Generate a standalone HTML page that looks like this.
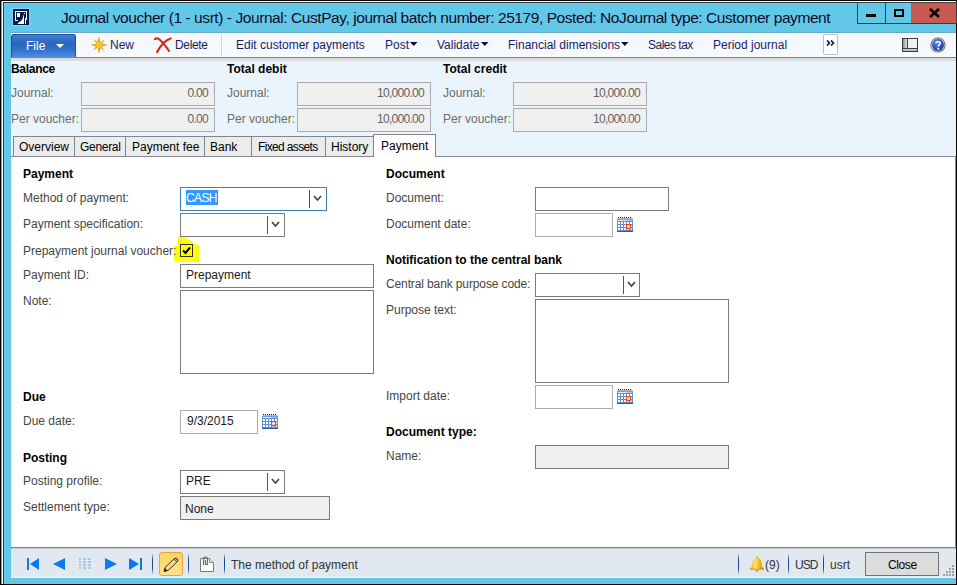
<!DOCTYPE html>
<html><head><meta charset="utf-8">
<style>
*{margin:0;padding:0;box-sizing:border-box}
html,body{width:957px;height:585px;overflow:hidden;background:#000}
body{position:relative;font-family:"Liberation Sans",sans-serif;font-size:12px;}
.a{position:absolute}
.t{position:absolute;white-space:nowrap;line-height:14px;font-size:12px}
.lbl{color:#454545}
.hd{font-weight:bold;color:#000}
.box{position:absolute;border:1px solid #7a7a7a;background:#fff}
.ro{position:absolute;border:1px solid #a8aaae;background:#f0f0f0}
.lt{position:absolute;border:1px solid #abadb2;background:#fff}
.val{position:absolute;white-space:nowrap;line-height:14px;color:#626262;text-align:right;letter-spacing:-0.72px}
.div{position:absolute;width:1px;background:#555}
.chev{position:absolute}
.tab{position:absolute;top:136px;height:20px;background:#ececec;border:1px solid #84848c;border-bottom:none}
.sep{position:absolute;width:1px;background:#4a6a96}
</style></head><body>
<!-- window frame -->
<div class="a" style="left:0;top:0;width:957px;height:585px;background:#000"></div>
<div class="a" style="left:1px;top:1px;width:955px;height:583px;background:#999"></div>
<div class="a" style="left:2px;top:1px;width:954px;height:583px;background:#fff"></div>
<div class="a" style="left:3px;top:2px;width:953px;height:582px;background:#2e3236"></div>
<div class="a" style="left:4px;top:3px;width:952px;height:581px;background:#66d3f4"></div>
<div class="a" style="left:5px;top:4px;width:951px;height:580px;background:#63c7e8"></div>
<div class="a" style="left:956px;top:1px;width:1px;height:584px;background:#000"></div>
<div class="a" style="left:0;top:584px;width:957px;height:1px;background:#000"></div>

<!-- app icon -->
<svg class="a" style="left:12px;top:8px" width="18" height="18" viewBox="0 0 18 18">
<rect x="0" y="0" width="18" height="18" fill="#7ad6f2"/>
<rect x="1" y="1" width="16" height="16" fill="#001a4a"/>
<path d="M3 3h12v9h-1V4H4v8h2v1H3z" fill="#fff"/>
<rect x="5" y="5" width="3" height="4" fill="#fff"/>
<path d="M5 16 L10 12 L12 6 L12 16 Z" fill="#fff"/>
<rect x="13" y="10" width="1" height="6" fill="#fff"/>
<rect x="12" y="5" width="1" height="1" fill="#fff"/>
</svg>

<!-- title -->
<div class="t" style="left:61px;top:8px;font-size:15.5px;line-height:20px;letter-spacing:-0.43px;color:#0c0c2a">Journal voucher (1 - usrt) - Journal: CustPay, journal batch number: 25179, Posted: NoJournal type: Customer payment</div>

<!-- caption buttons -->
<div class="a" style="left:857px;top:2px;width:100px;height:22px;background:#3c3c3c"></div>
<div class="a" style="left:858px;top:3px;width:27px;height:20px;background:#63c8e8"></div>
<div class="a" style="left:886px;top:3px;width:25px;height:20px;background:#63c8e8"></div>
<div class="a" style="left:911px;top:3px;width:45px;height:20px;background:#c75a50"></div>
<div class="a" style="left:866px;top:14px;width:10px;height:3px;background:#000"></div>
<div class="a" style="left:894px;top:9px;width:10px;height:8px;border:2px solid #000"></div>
<svg class="a" style="left:929px;top:8px" width="11" height="10" viewBox="0 0 11 10"><path d="M1 1L10 9M10 1L1 9" stroke="#000" stroke-width="2.6"/></svg>

<!-- toolbar -->
<div class="a" style="left:11px;top:32px;width:945px;height:1px;background:#6ca9c9"></div>
<div class="a" style="left:11px;top:33px;width:945px;height:24px;background:linear-gradient(#ffffff,#f3f8fe 8%,#f6fafe 90%,#ffffff)"></div>
<div class="a" style="left:11px;top:57px;width:945px;height:1px;background:#7d818b"></div>
<div class="a" style="left:11px;top:34px;width:65px;height:23px;border:1px solid #1f4d9e;border-bottom:none;border-radius:3px 3px 0 0;background:linear-gradient(#3f7fd4,#2b65bb 40%,#3474cb 70%,#4a8ee2)"></div>
<div class="t" style="left:26px;top:39px;color:#fff">File</div>
<svg class="a" style="left:56px;top:44px" width="8" height="5"><path d="M0 0H8L4 4Z" fill="#fff"/></svg>

<svg class="a" style="left:91px;top:37px" width="16" height="16" viewBox="0 0 16 16">
<g fill="#f4a40c" stroke="#d08a10" stroke-width="0.4">
<path d="M8 0.3L9.6 6.4L15.7 8L9.6 9.6L8 15.7L6.4 9.6L0.3 8L6.4 6.4Z"/>
<path d="M2.8 2.8L8.9 6.7L13.2 2.8L9.3 8.9L13.2 13.2L7.1 9.3L2.8 13.2L6.7 7.1Z"/>
</g>
<circle cx="8" cy="8" r="3" fill="#ffc81a"/>
</svg>
<div class="t" style="left:110px;top:38px;color:#1e1b5e">New</div>
<svg class="a" style="left:154px;top:37px" width="18" height="17" viewBox="0 0 18 17">
<path d="M1 2.2C2 1 4 1.2 5.5 2.5C9 5.5 12 9.5 15 14" stroke="#d8280e" stroke-width="2.1" fill="none" stroke-linecap="round"/>
<path d="M16.5 1.5C12 3 7 7.5 3.2 15" stroke="#d8280e" stroke-width="2.3" fill="none" stroke-linecap="round"/>
</svg>
<div class="t" style="left:175px;top:38px;color:#1e1b5e;letter-spacing:-0.35px">Delete</div>
<div class="a" style="left:221px;top:34px;width:1px;height:22px;background:#d0d6de"></div>
<div class="t" style="left:236px;top:38px;color:#1e1b5e">Edit customer payments</div>
<div class="t" style="left:385px;top:38px;color:#1e1b5e">Post</div>
<svg class="a" style="left:410px;top:42px" width="8" height="5"><path d="M0 0H7.5L3.75 4Z" fill="#0c0c3c"/></svg>
<div class="t" style="left:437px;top:38px;color:#1e1b5e">Validate</div>
<svg class="a" style="left:481px;top:42px" width="8" height="5"><path d="M0 0H7.5L3.75 4Z" fill="#0c0c3c"/></svg>
<div class="t" style="left:508px;top:38px;color:#1e1b5e">Financial dimensions</div>
<svg class="a" style="left:621px;top:42px" width="8" height="5"><path d="M0 0H7.5L3.75 4Z" fill="#0c0c3c"/></svg>
<div class="t" style="left:648px;top:38px;color:#1e1b5e;letter-spacing:-0.5px">Sales tax</div>
<div class="t" style="left:713px;top:38px;color:#1e1b5e">Period journal</div>
<div class="a" style="left:823px;top:34px;width:15px;height:21px;border:1px solid #b8c0cc;border-radius:2px;background:#fff"></div>
<svg class="a" style="left:826px;top:40px" width="9" height="6" viewBox="0 0 9 6"><path d="M1 0.5L3.5 3L1 5.5M5 0.5L7.5 3L5 5.5" stroke="#0a1650" stroke-width="1.6" fill="none"/></svg>
<svg class="a" style="left:902px;top:38px" width="16" height="14" viewBox="0 0 16 14">
<defs><linearGradient id="lg1" x1="0" x2="1" y1="0" y2="0"><stop offset="0" stop-color="#8a8e92"/><stop offset="1" stop-color="#e6e8ea"/></linearGradient>
<linearGradient id="lg2" x1="0" x2="0" y1="0" y2="1"><stop offset="0" stop-color="#d8dadc"/><stop offset="1" stop-color="#a8acb0"/></linearGradient></defs>
<rect x="0" y="0" width="16" height="14" fill="#3a3e42"/>
<rect x="1" y="1" width="4" height="9" fill="url(#lg1)"/>
<rect x="6" y="1" width="9" height="9" fill="#f2f2f2"/>
<rect x="1" y="11" width="14" height="2" fill="url(#lg2)"/>
</svg>
<svg class="a" style="left:930px;top:37px" width="16" height="16" viewBox="0 0 16 16">
<defs><radialGradient id="hg" cx="0.4" cy="0.35" r="0.7"><stop offset="0" stop-color="#5a8ae8"/><stop offset="0.6" stop-color="#2a52c0"/><stop offset="1" stop-color="#1a3a98"/></radialGradient></defs>
<circle cx="8" cy="8" r="7.6" fill="#555a60"/>
<circle cx="8" cy="8" r="6.8" fill="#c8ccd0"/>
<circle cx="8" cy="8" r="5.9" fill="url(#hg)"/>
<path d="M5.9 6.3C5.9 4.1 10.3 4.1 10.3 6.2C10.3 7.6 8.2 7.7 8.2 9.6" stroke="#f0f0f0" stroke-width="1.7" fill="none"/>
<rect x="7.2" y="10.7" width="2" height="2" fill="#f0f0f0"/>
</svg>

<!-- header info area -->
<div class="a" style="left:11px;top:58px;width:945px;height:99px;background:#eaf4fc"></div>
<div class="a" style="left:11px;top:58px;width:945px;height:3px;background:#dcdee2"></div>

<div class="t hd" style="left:11px;top:62px;letter-spacing:-0.3px">Balance</div>
<div class="t lbl" style="left:11px;top:86px;color:#6d6d6d">Journal:</div>
<div class="t lbl" style="left:11px;top:112px;color:#6d6d6d">Per voucher:</div>
<div class="ro" style="left:81px;top:82px;width:134px;height:24px"></div>
<div class="ro" style="left:81px;top:108px;width:134px;height:24px"></div>
<div class="val" style="left:81px;top:86px;width:127px">0.00</div>
<div class="val" style="left:81px;top:112px;width:127px">0.00</div>

<div class="t hd" style="left:227px;top:62px">Total debit</div>
<div class="t lbl" style="left:227px;top:86px;color:#6d6d6d">Journal:</div>
<div class="t lbl" style="left:227px;top:112px;color:#6d6d6d">Per voucher:</div>
<div class="ro" style="left:297px;top:82px;width:134px;height:24px"></div>
<div class="ro" style="left:297px;top:108px;width:134px;height:24px"></div>
<div class="val" style="left:297px;top:86px;width:127px">10,000.00</div>
<div class="val" style="left:297px;top:112px;width:127px">10,000.00</div>

<div class="t hd" style="left:443px;top:62px">Total credit</div>
<div class="t lbl" style="left:443px;top:86px;color:#6d6d6d">Journal:</div>
<div class="t lbl" style="left:443px;top:112px;color:#6d6d6d">Per voucher:</div>
<div class="ro" style="left:513px;top:82px;width:134px;height:24px"></div>
<div class="ro" style="left:513px;top:108px;width:134px;height:24px"></div>
<div class="val" style="left:513px;top:86px;width:127px">10,000.00</div>
<div class="val" style="left:513px;top:112px;width:127px">10,000.00</div>

<!-- tabs -->
<div class="tab" style="left:13px;width:62px"></div>
<div class="tab" style="left:74px;width:52px"></div>
<div class="tab" style="left:125px;width:80px"></div>
<div class="tab" style="left:204px;width:48px"></div>
<div class="tab" style="left:251px;width:75px"></div>
<div class="tab" style="left:325px;width:49px"></div>
<div class="t" style="left:19px;top:140px;color:#000">Overview</div>
<div class="t" style="left:80px;top:140px;color:#000;letter-spacing:-0.3px">General</div>
<div class="t" style="left:132px;top:140px;color:#000">Payment fee</div>
<div class="t" style="left:210px;top:140px;color:#000">Bank</div>
<div class="t" style="left:258px;top:140px;color:#000;letter-spacing:-0.65px">Fixed assets</div>
<div class="t" style="left:331px;top:140px;color:#000">History</div>

<!-- content -->
<div class="a" style="left:11px;top:156px;width:945px;height:391px;background:#fff;border-top:1px solid #84848c;border-right:1px solid #8a8e98"></div>
<div class="a" style="left:373px;top:134px;width:63px;height:23px;background:#fff;border:1px solid #84848c;border-bottom:none"></div>
<div class="t" style="left:381px;top:139px;color:#000">Payment</div>

<svg class="a" style="left:174px;top:237px" width="26" height="26" viewBox="0 0 26 26"><path d="M4 0H11L23 8H25V25H16L0 24V9H4Z" fill="#ffff00"/></svg>
<div class="t hd" style="left:23px;top:167px">Payment</div>
<div class="t lbl" style="left:23px;top:191px">Method of payment:</div>
<div class="t lbl" style="left:23px;top:217px">Payment specification:</div>
<div class="t lbl" style="left:23px;top:244px">Prepayment journal voucher:</div>
<div class="t lbl" style="left:23px;top:268px">Payment ID:</div>
<div class="t lbl" style="left:23px;top:294px">Note:</div>

<div class="box" style="left:180px;top:187px;width:147px;height:24px;border-color:#3c7fb1"></div>
<div class="a" style="left:186px;top:190px;width:32px;height:15px;background:#3399ff"></div>
<div class="t" style="left:186px;top:191px;color:#fff;letter-spacing:-0.6px">CASH</div>
<div class="a" style="left:217px;top:190px;width:1px;height:15px;background:#e06010"></div>
<div class="div" style="left:309px;top:190px;height:18px"></div>

<div class="box" style="left:180px;top:213px;width:105px;height:24px"></div>
<div class="div" style="left:267px;top:216px;height:18px"></div>

<div class="a" style="left:180px;top:244px;width:13px;height:13px;border:1px solid #333"></div>
<svg class="a" style="left:181px;top:245px" width="11" height="11" viewBox="0 0 11 11"><path d="M2 5.5L4.5 8L9 2.5" stroke="#000" stroke-width="2" fill="none"/></svg>

<div class="box" style="left:180px;top:264px;width:194px;height:24px"></div>
<div class="t" style="left:186px;top:268px;color:#1a1a1a">Prepayment</div>
<div class="box" style="left:180px;top:290px;width:194px;height:84px"></div>

<div class="t hd" style="left:23px;top:390px">Due</div>
<div class="t lbl" style="left:23px;top:414px">Due date:</div>
<div class="lt" style="left:180px;top:410px;width:78px;height:24px"></div>
<div class="t" style="left:187px;top:414px;color:#1a1a1a">9/3/2015</div>

<div class="t hd" style="left:23px;top:451px">Posting</div>
<div class="t lbl" style="left:23px;top:474px">Posting profile:</div>
<div class="t lbl" style="left:23px;top:500px">Settlement type:</div>
<div class="box" style="left:180px;top:470px;width:105px;height:24px"></div>
<div class="t" style="left:186px;top:474px;color:#1a1a1a">PRE</div>
<div class="div" style="left:267px;top:473px;height:18px"></div>
<div class="ro" style="left:180px;top:496px;width:150px;height:24px;border-color:#7a7a7a"></div>
<div class="t" style="left:185px;top:502px;color:#1a1a1a">None</div>

<!-- right column -->
<div class="t hd" style="left:386px;top:167px">Document</div>
<div class="t lbl" style="left:386px;top:191px">Document:</div>
<div class="t lbl" style="left:386px;top:217px">Document date:</div>
<div class="box" style="left:535px;top:187px;width:134px;height:24px"></div>
<div class="lt" style="left:535px;top:213px;width:78px;height:24px"></div>

<div class="t hd" style="left:386px;top:253px">Notification to the central bank</div>
<div class="t lbl" style="left:386px;top:277px;letter-spacing:-0.12px">Central bank purpose code:</div>
<div class="t lbl" style="left:386px;top:303px">Purpose text:</div>
<div class="box" style="left:535px;top:273px;width:105px;height:24px"></div>
<div class="div" style="left:623px;top:276px;height:18px"></div>
<div class="box" style="left:535px;top:299px;width:194px;height:84px"></div>
<div class="t lbl" style="left:386px;top:389px">Import date:</div>
<div class="lt" style="left:535px;top:385px;width:78px;height:24px"></div>

<div class="t hd" style="left:386px;top:425px">Document type:</div>
<div class="t lbl" style="left:386px;top:449px">Name:</div>
<div class="ro" style="left:535px;top:445px;width:194px;height:24px;border-color:#7a7a7a"></div>


<svg class="a" style="left:313px;top:195px" width="9" height="7" viewBox="0 0 9 7"><path d="M1 1L4.5 5L8 1" stroke="#444" stroke-width="1.7" fill="none"/></svg>
<svg class="a" style="left:271px;top:221px" width="9" height="7" viewBox="0 0 9 7"><path d="M1 1L4.5 5L8 1" stroke="#444" stroke-width="1.7" fill="none"/></svg>
<svg class="a" style="left:271px;top:478px" width="9" height="7" viewBox="0 0 9 7"><path d="M1 1L4.5 5L8 1" stroke="#444" stroke-width="1.7" fill="none"/></svg>
<svg class="a" style="left:627px;top:281px" width="9" height="7" viewBox="0 0 9 7"><path d="M1 1L4.5 5L8 1" stroke="#444" stroke-width="1.7" fill="none"/></svg>
<svg class="a" style="left:262px;top:413px" width="16" height="16" viewBox="0 0 16 16">
<rect x="0" y="3" width="16" height="13" fill="#5d8fd6"/>
<rect x="0" y="3" width="16" height="2" fill="#6e9fe6"/>
<rect x="1" y="4" width="8" height="1" fill="#e8f0fc"/><rect x="9" y="4" width="6" height="1" fill="#a8c8f4"/>
<path d="M1 1.5h1M3 1.5h1M5 1.5h1M7 1.5h1M9 1.5h1M11 1.5h1M13 1.5h1" stroke="#202020" stroke-width="1"/><path d="M0.5 2.5h15" stroke="#b8b8b8" stroke-width="1"/>
<g fill="#fff"><rect x="1" y="6" width="2" height="2"/><rect x="4" y="6" width="2" height="2"/><rect x="7" y="6" width="2" height="2"/><rect x="10" y="6" width="2" height="2"/><rect x="13" y="6" width="2" height="2"/>
<rect x="1" y="9" width="2" height="2"/><rect x="4" y="9" width="2" height="2"/><rect x="7" y="9" width="2" height="2"/><rect x="13" y="9" width="2" height="2" fill="#dce8f8"/>
<rect x="1" y="12" width="2" height="2"/><rect x="4" y="12" width="2" height="2"/><rect x="7" y="12" width="2" height="2" fill="#e8f0fb"/><rect x="10" y="12" width="2" height="2" fill="#cfe0f6"/><rect x="13" y="12" width="2" height="2" fill="#c4d8f2"/></g>
<rect x="9.6" y="8.6" width="3.8" height="3.8" fill="#fff" stroke="#e84a14" stroke-width="1.2"/>
<rect x="0" y="15" width="16" height="1" fill="#34588e"/>
</svg>
<svg class="a" style="left:617px;top:216px" width="16" height="16" viewBox="0 0 16 16">
<rect x="0" y="3" width="16" height="13" fill="#5d8fd6"/>
<rect x="0" y="3" width="16" height="2" fill="#6e9fe6"/>
<rect x="1" y="4" width="8" height="1" fill="#e8f0fc"/><rect x="9" y="4" width="6" height="1" fill="#a8c8f4"/>
<path d="M1 1.5h1M3 1.5h1M5 1.5h1M7 1.5h1M9 1.5h1M11 1.5h1M13 1.5h1" stroke="#202020" stroke-width="1"/><path d="M0.5 2.5h15" stroke="#b8b8b8" stroke-width="1"/>
<g fill="#fff"><rect x="1" y="6" width="2" height="2"/><rect x="4" y="6" width="2" height="2"/><rect x="7" y="6" width="2" height="2"/><rect x="10" y="6" width="2" height="2"/><rect x="13" y="6" width="2" height="2"/>
<rect x="1" y="9" width="2" height="2"/><rect x="4" y="9" width="2" height="2"/><rect x="7" y="9" width="2" height="2"/><rect x="13" y="9" width="2" height="2" fill="#dce8f8"/>
<rect x="1" y="12" width="2" height="2"/><rect x="4" y="12" width="2" height="2"/><rect x="7" y="12" width="2" height="2" fill="#e8f0fb"/><rect x="10" y="12" width="2" height="2" fill="#cfe0f6"/><rect x="13" y="12" width="2" height="2" fill="#c4d8f2"/></g>
<rect x="9.6" y="8.6" width="3.8" height="3.8" fill="#fff" stroke="#e84a14" stroke-width="1.2"/>
<rect x="0" y="15" width="16" height="1" fill="#34588e"/>
</svg>
<svg class="a" style="left:617px;top:388px" width="16" height="16" viewBox="0 0 16 16">
<rect x="0" y="3" width="16" height="13" fill="#5d8fd6"/>
<rect x="0" y="3" width="16" height="2" fill="#6e9fe6"/>
<rect x="1" y="4" width="8" height="1" fill="#e8f0fc"/><rect x="9" y="4" width="6" height="1" fill="#a8c8f4"/>
<path d="M1 1.5h1M3 1.5h1M5 1.5h1M7 1.5h1M9 1.5h1M11 1.5h1M13 1.5h1" stroke="#202020" stroke-width="1"/><path d="M0.5 2.5h15" stroke="#b8b8b8" stroke-width="1"/>
<g fill="#fff"><rect x="1" y="6" width="2" height="2"/><rect x="4" y="6" width="2" height="2"/><rect x="7" y="6" width="2" height="2"/><rect x="10" y="6" width="2" height="2"/><rect x="13" y="6" width="2" height="2"/>
<rect x="1" y="9" width="2" height="2"/><rect x="4" y="9" width="2" height="2"/><rect x="7" y="9" width="2" height="2"/><rect x="13" y="9" width="2" height="2" fill="#dce8f8"/>
<rect x="1" y="12" width="2" height="2"/><rect x="4" y="12" width="2" height="2"/><rect x="7" y="12" width="2" height="2" fill="#e8f0fb"/><rect x="10" y="12" width="2" height="2" fill="#cfe0f6"/><rect x="13" y="12" width="2" height="2" fill="#c4d8f2"/></g>
<rect x="9.6" y="8.6" width="3.8" height="3.8" fill="#fff" stroke="#e84a14" stroke-width="1.2"/>
<rect x="0" y="15" width="16" height="1" fill="#34588e"/>
</svg>
<!-- status bar -->
<div class="a" style="left:11px;top:547px;width:945px;height:1px;background:#7a7e88"></div>
<div class="a" style="left:11px;top:548px;width:945px;height:1px;background:#c4ccd6"></div>
<div class="a" style="left:11px;top:549px;width:945px;height:29px;background:#e1e8f0"></div>
<div class="a" style="left:11px;top:577px;width:945px;height:1px;background:#eef3f8"></div>

<div class="t" style="left:231px;top:558px;color:#333">The method of payment</div>
<div class="t" style="left:765px;top:558px;color:#333">(9)</div>
<div class="t" style="left:795px;top:558px;color:#333;letter-spacing:-1px">USD</div>
<div class="t" style="left:830px;top:558px;color:#333">usrt</div>
<div class="a" style="left:865px;top:552px;width:74px;height:24px;background:#dcdcdc;border:1px solid #707070"></div>
<div class="t" style="left:888px;top:558px;color:#000;letter-spacing:-0.4px">Close</div>


<svg class="a" style="left:27px;top:558px" width="13" height="12" viewBox="0 0 13 12"><rect x="0" y="0" width="2" height="12" fill="#0a7af0"/><path d="M3 6L12 0V12Z" fill="#0a7af0"/></svg>
<svg class="a" style="left:53px;top:558px" width="13" height="12" viewBox="0 0 13 12"><path d="M0 6L12 0V12Z" fill="#0a7af0"/></svg>
<svg class="a" style="left:79px;top:558px" width="13" height="12" viewBox="0 0 13 12"><g fill="#a9c6ee"><rect x="0" y="0" width="2" height="2"/><rect x="0" y="3" width="2" height="2"/><rect x="0" y="6" width="2" height="2"/><rect x="0" y="9" width="2" height="2"/>
<rect x="4" y="0" width="3" height="2"/><rect x="4" y="3" width="3" height="2"/><rect x="4" y="6" width="3" height="2"/><rect x="4" y="9" width="3" height="2"/>
<rect x="9" y="0" width="3" height="2"/><rect x="9" y="3" width="3" height="2"/><rect x="9" y="6" width="3" height="2"/><rect x="9" y="9" width="3" height="2"/></g></svg>
<svg class="a" style="left:105px;top:558px" width="13" height="12" viewBox="0 0 13 12"><path d="M12 6L0 0V12Z" fill="#0a7af0"/></svg>
<svg class="a" style="left:129px;top:558px" width="13" height="12" viewBox="0 0 13 12"><rect x="11" y="0" width="2" height="12" fill="#0a7af0"/><path d="M10 6L0 0V12Z" fill="#0a7af0"/></svg>
<div class="sep" style="left:152px;top:553px;height:22px;background:linear-gradient(rgba(20,60,120,0),#1a4a8a 30%,#1a4a8a 70%,rgba(20,60,120,0))"></div>
<div class="a" style="left:159px;top:552px;width:24px;height:24px;border:1px solid #e6a43a;border-radius:3px;background:linear-gradient(#ffd463,#ffe48e)"></div>
<svg class="a" style="left:162px;top:556px" width="18" height="17" viewBox="0 0 18 17">
<path d="M2 15.5L3 11.5L13 2L16 5L6 14.5Z" fill="#f6d98a" stroke="#3a3020" stroke-width="1"/>
<path d="M12 3L15 6" stroke="#40a040" stroke-width="1.3"/><path d="M13.5 1.5L16.5 4.5" stroke="#e05050" stroke-width="1.6"/>
<path d="M2 15.5L3 12L5.5 14.5Z" fill="#222"/>
</svg>
<div class="sep" style="left:188px;top:553px;height:22px;background:linear-gradient(rgba(20,60,120,0),#1a4a8a 30%,#1a4a8a 70%,rgba(20,60,120,0))"></div>
<svg class="a" style="left:200px;top:556px" width="14" height="16" viewBox="0 0 14 16">
<path d="M0.5 15.5V2.5H9.5L13.5 6.5V15.5Z" fill="#fff" stroke="#7a7a7a"/>
<path d="M9.5 2.5V6.5H13.5" fill="#e8e8e8" stroke="#8a8a8a"/>
<path d="M3.5 9V2.5C3.5 0.5 7.5 0.5 7.5 2.5V8C7.5 9 5.5 9 5.5 8V4" stroke="#6a6a6a" stroke-width="1.2" fill="none"/>
</svg>
<div class="sep" style="left:224px;top:553px;height:22px;background:linear-gradient(rgba(20,60,120,0),#1a4a8a 30%,#1a4a8a 70%,rgba(20,60,120,0))"></div>
<div class="sep" style="left:738px;top:553px;height:22px;background:linear-gradient(rgba(20,60,120,0),#1a4a8a 30%,#1a4a8a 70%,rgba(20,60,120,0))"></div>
<svg class="a" style="left:749px;top:556px" width="16" height="16" viewBox="0 0 16 16">
<defs><linearGradient id="bg1" x1="0" x2="1" y1="0" y2="0"><stop offset="0" stop-color="#e09a10"/><stop offset="0.35" stop-color="#ffe27a"/><stop offset="0.7" stop-color="#f2b418"/><stop offset="1" stop-color="#c88408"/></linearGradient></defs>
<circle cx="8" cy="1.6" r="1.1" fill="#e8a818"/>
<path d="M8 1.8C4.6 1.8 3.4 4.5 3.3 8C3.2 10.6 2.6 11.6 1 12.4V13.6H15V12.4C13.4 11.6 12.8 10.6 12.7 8C12.6 4.5 11.4 1.8 8 1.8Z" fill="url(#bg1)"/>
<path d="M1 12.8H15V13.6H1Z" fill="#d08a10"/>
<ellipse cx="8" cy="14.6" rx="1.8" ry="1.1" fill="#e0a010"/>
</svg>
<div class="sep" style="left:788px;top:553px;height:22px;background:linear-gradient(rgba(20,60,120,0),#1a4a8a 30%,#1a4a8a 70%,rgba(20,60,120,0))"></div>
<div class="sep" style="left:823px;top:553px;height:22px;background:linear-gradient(rgba(20,60,120,0),#1a4a8a 30%,#1a4a8a 70%,rgba(20,60,120,0))"></div>
<svg class="a" style="left:943px;top:565px" width="12" height="12" viewBox="0 0 12 12"><g fill="#a0a0a0">
<rect x="9" y="0" width="2" height="2"/><rect x="6" y="3" width="2" height="2"/><rect x="9" y="3" width="2" height="2"/>
<rect x="3" y="6" width="2" height="2"/><rect x="6" y="6" width="2" height="2"/><rect x="9" y="6" width="2" height="2"/>
<rect x="0" y="9" width="2" height="2"/><rect x="3" y="9" width="2" height="2"/><rect x="6" y="9" width="2" height="2"/><rect x="9" y="9" width="2" height="2"/></g></svg>
</body></html>
